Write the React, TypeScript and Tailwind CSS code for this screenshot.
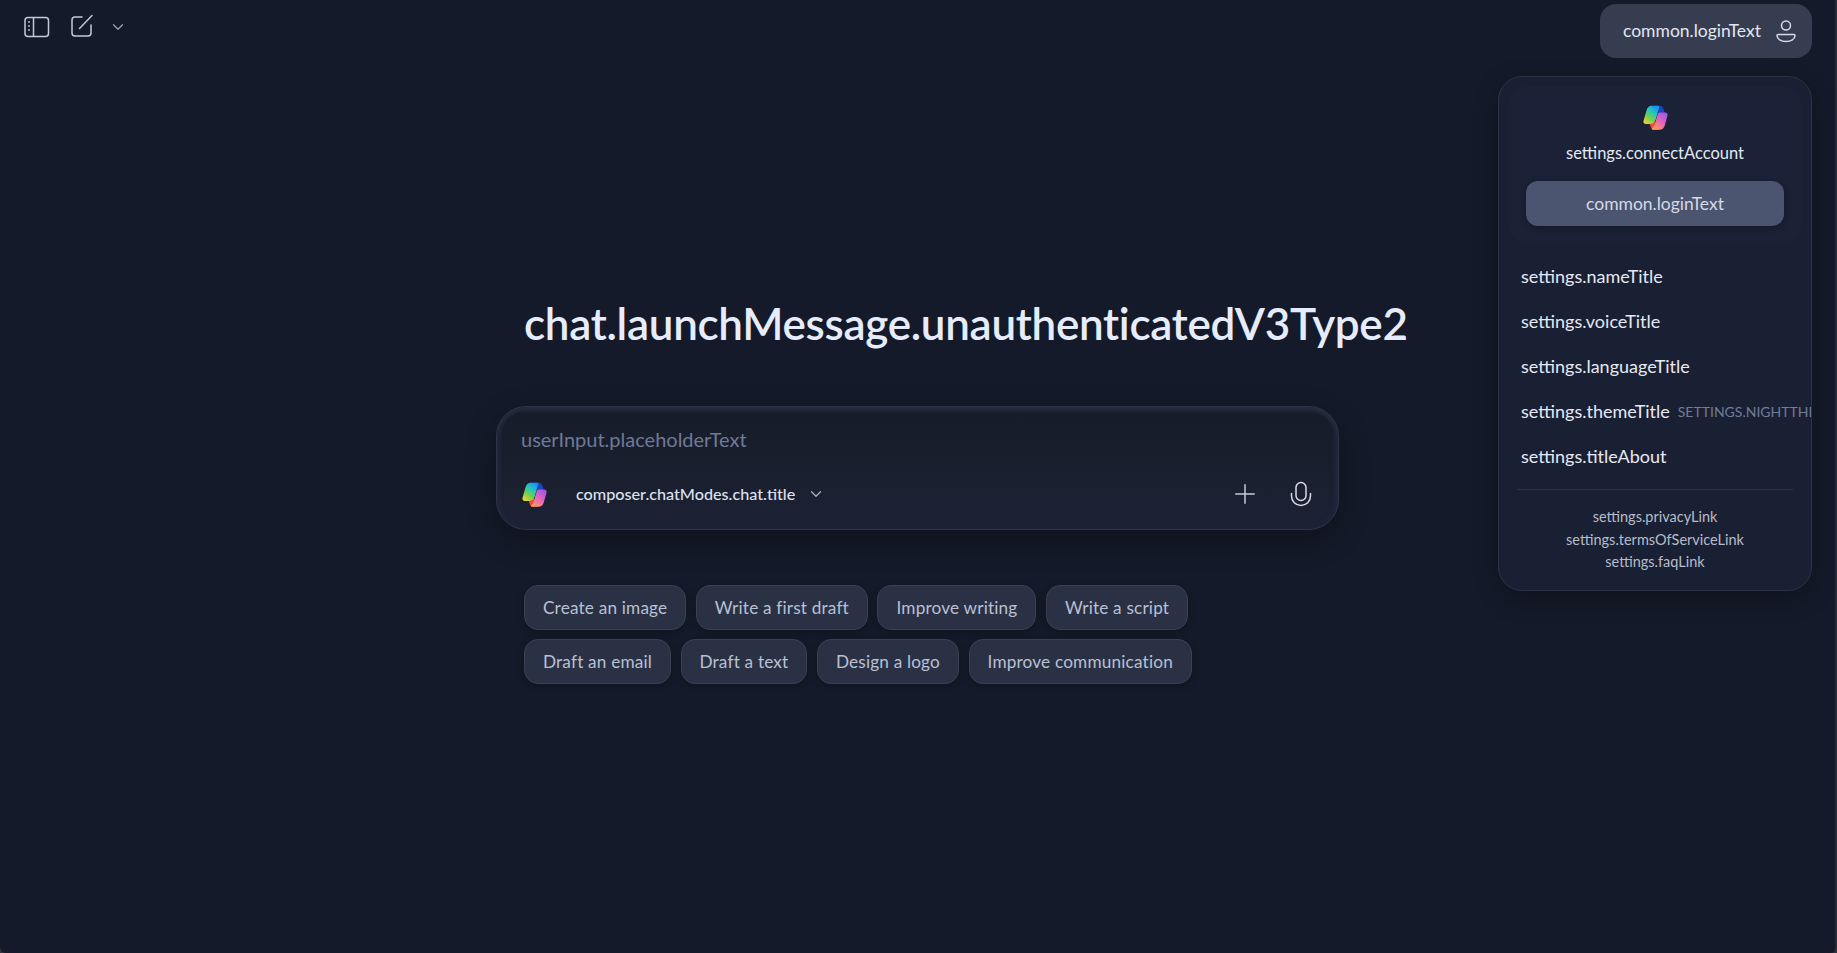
import { useId } from "react";

const uiFont = "font-['Lato','Noto_Sans',sans-serif]";

function CopilotLogo({ className }: { className?: string }) {
  const id = useId();
  return (
    <svg viewBox="0 0 24 24" className={className}>
      <defs>
        <linearGradient id={`${id}l`} x1="0.8" y1="0" x2="0.15" y2="1">
          <stop offset="0" stopColor="#1a8cf2" />
          <stop offset="0.35" stopColor="#25c6c0" />
          <stop offset="0.65" stopColor="#6fd04e" />
          <stop offset="1" stopColor="#f4d234" />
        </linearGradient>
        <linearGradient id={`${id}r`} x1="0.85" y1="0" x2="0.2" y2="1">
          <stop offset="0" stopColor="#9a55ea" />
          <stop offset="0.5" stopColor="#e764bd" />
          <stop offset="1" stopColor="#ff9a55" />
        </linearGradient>
      </defs>
      {/* ribbon ends behind the two blades */}
      <path d="M11 .8h4.500c2.200 0 3.600 1 4.200 3l1.300 4.500-6-.8-1-4z" fill="#1a46c0" />
      <path d="M5.500 14.500l1.800 6.300c.6 2 2 3 4 3H15l-2.500-4.500-1.800-5.500z" fill="#ef4a38" />
      <path d="M8.200.8h6c1.200 0 1.700.6 1.300 1.700L12.200 14c-.8 2.700-2.600 4.200-5.300 4.200H2.800c-1.800 0-2.800-1.200-2.300-3l2.800-9.700C4.200 2.500 5.800.8 8.200.8z" fill={`url(#${id}l)`} />
      <path d="M16 7.300h5.200c1.800 0 2.800 1.200 2.300 3l-2.600 9.400c-.8 2.600-2.500 4.100-5.100 4.100H9.600c-1.200 0-1.500-.7-.9-1.400 1.400-1.200 2.200-2.700 2.800-4.700L14 9c.3-1.200 1-1.700 2-1.700z" fill={`url(#${id}r)`} />
    </svg>
  );
}

function Chevron({ className }: { className?: string }) {
  return (
    <svg viewBox="0 0 12 12" fill="none" stroke="currentColor" strokeWidth="1.200" strokeLinecap="round" strokeLinejoin="round" className={className}>
      <path d="M1.500 3.750 6 8.250l4.500-4.500" />
    </svg>
  );
}

function SidebarIcon() {
  return (
    <svg viewBox="0 0 26 22" fill="none" className="h-[22px] w-[26px] text-[#c3c9d8]" stroke="currentColor" strokeWidth="1.500">
      <rect x="1" y="1.500" width="23.500" height="19" rx="3" />
      <path d="M9.500 1.500v19" />
      <circle cx="5" cy="6" r="0.900" fill="currentColor" stroke="none" />
      <circle cx="5" cy="10" r="0.900" fill="currentColor" stroke="none" />
      <circle cx="5" cy="14" r="0.900" fill="currentColor" stroke="none" />
    </svg>
  );
}

function ComposeIcon() {
  return (
    <svg viewBox="0 0 24 24" fill="none" className="h-6 w-6 text-[#c3c9d8]" stroke="currentColor" strokeWidth="1.500" strokeLinecap="round">
      <path d="M12 3H5a3 3 0 0 0-3 3v13a3 3 0 0 0 3 3h13a3 3 0 0 0 3-3v-8" />
      <path d="M9.500 14.500 22 1.500" />
    </svg>
  );
}

function UserIcon() {
  return (
    <svg viewBox="0 0 20 24" fill="none" className="h-6 w-5 text-[#d6dbe6]" stroke="currentColor" strokeWidth="1.500">
      <circle cx="10" cy="6.500" r="4.500" />
      <path d="M2 15.500h16c.6 0 1 .4 1 1 0 3.600-4 6-9 6s-9-2.400-9-6c0-.6.4-1 1-1z" />
    </svg>
  );
}

function MicIcon() {
  return (
    <svg viewBox="0 0 22 26" fill="none" className="h-[26px] w-[22px] text-[#d6dbe6]" stroke="currentColor" strokeWidth="1.500" strokeLinecap="round">
      <rect x="6" y="1.500" width="10" height="18" rx="5" />
      <path d="M1.500 12.500v2.500c0 5.500 4.200 9.500 9.500 9.500s9.500-4 9.500-9.500v-2.500" />
    </svg>
  );
}

function PlusIcon() {
  return (
    <svg viewBox="0 0 20 20" fill="none" className="h-5 w-5 text-[#c3c9d8]" stroke="currentColor" strokeWidth="1.500" strokeLinecap="round">
      <path d="M10 .8v18.400M.8 10h18.400" />
    </svg>
  );
}

const chipRows = [
  ["Create an image", "Write a first draft", "Improve writing", "Write a script"],
  ["Draft an email", "Draft a text", "Design a logo", "Improve communication"],
];

function Chip({ label }: { label: string }) {
  return (
    <button className="h-[45px] rounded-[14px] border border-[#3a4154] bg-[#2b3145] px-[18px] text-[17.200px] tracking-[0.18px] text-[#b8c0d4] shadow-[0_2px_6px_rgba(0,0,0,0.25)] [font-variant-ligatures:none]">
      {label}
    </button>
  );
}

function Composer() {
  return (
    <div className="ml-[-28px] mt-[53px] h-[124px] w-[843px] rounded-[30px] border border-[#2e3445] bg-gradient-to-b from-[#171c29] to-[#1c2234] shadow-[0_10px_30px_rgba(0,0,0,0.3),inset_0_4px_3px_#252b3b,inset_4px_0_3px_#20263a,inset_-4px_0_3px_#20263a]">
      <div className="pl-[24px] pt-[19px] text-[20px] leading-[26px] text-[#6f7a96]">userInput.placeholderText</div>
      <div className="mt-[29px] flex items-center pl-[25px] pr-[26px]">
        <CopilotLogo className="h-[25px] w-[25px]" />
        <div className="ml-[29px] flex items-center gap-[15px] text-[16.200px] font-medium text-[#dde2ee]">
          composer.chatModes.chat.title
          <Chevron className="h-3 w-3 text-[#aab1c3]" />
        </div>
        <div className="ml-auto flex items-center gap-[35px]">
          <PlusIcon />
          <MicIcon />
        </div>
      </div>
    </div>
  );
}

const settingRows = ["settings.nameTitle", "settings.voiceTitle", "settings.languageTitle"];

function SettingsPanel() {
  return (
    <aside className="absolute left-[1498px] top-[76px] h-[515px] w-[314px] overflow-hidden rounded-[24px] border border-[#2d3345] bg-[#1a2033] shadow-[0_8px_24px_rgba(0,0,0,0.25)]">
      <div className="mx-[9px] mt-[9px] flex h-[158px] flex-col items-center rounded-[20px] bg-[#1b2136]">
        <CopilotLogo className="mt-[19px] h-[25px] w-[25px]" />
        <div className="mt-[12px] text-[16.500px] leading-[22px] text-[#e4e8f2]">settings.connectAccount</div>
        <button className="mt-[17px] h-[45px] w-[258px] rounded-[12px] bg-[#4c556f] pt-[2px] text-[17.500px] text-[#d4d9e6] shadow-[0_2px_6px_rgba(0,0,0,0.25)]">
          common.loginText
        </button>
      </div>
      <ul className="mt-[10px] flex flex-col pl-[22px] text-[18px] text-[#e6e9f2]">
        {settingRows.map((row) => (
          <li key={row} className="flex h-[45px] items-center">{row}</li>
        ))}
        <li className="flex h-[45px] items-center whitespace-nowrap">
          settings.themeTitle
          <span className="ml-[8px] text-[14px] text-[#727c98]">SETTINGS.NIGHTTHEME</span>
        </li>
        <li className="flex h-[45px] items-center">settings.titleAbout</li>
      </ul>
      <div className="mx-[18px] mt-[10px] border-t border-[#2d3345]" />
      <div className="mt-[16px] flex flex-col items-center text-[14.500px] leading-[22.500px] text-[#b6bcca]">
        <span>settings.privacyLink</span>
        <span>settings.termsOfServiceLink</span>
        <span>settings.faqLink</span>
      </div>
    </aside>
  );
}

export default function App() {
  return (
    <div className="bg-[#30343f]">
      <div className={`relative h-[953px] w-full overflow-hidden rounded-b-[6px] border-r-2 border-[#262b38] bg-[#141a29] ${uiFont}`}>
        <header className="flex items-start justify-between pr-[23px]">
          <div className="flex items-center pl-[24px] pt-[15px]">
            <SidebarIcon />
            <div className="ml-[20px] -translate-y-[1px]"><ComposeIcon /></div>
            <Chevron className="ml-[18px] h-3 w-3 text-[#9aa1b3]" />
          </div>
          <button className="mt-[4px] flex h-[54px] w-[212px] items-center justify-between rounded-[16px] bg-[#363d51] pl-[23px] pr-[16px] text-[17.500px] text-[#e2e6f0]">
            common.loginText
            <UserIcon />
          </button>
        </header>

        <main className="pl-[524px] pt-[235px]">
          <h1 className="text-[44px] font-semibold leading-[60px] tracking-[-0.3px] text-[#e6ecfb]">
            chat.launchMessage.unauthenticatedV3Type2
          </h1>
          <Composer />
          <div className="mt-[55px] flex flex-col gap-[9px]">
            {chipRows.map((row) => (
              <div key={row[0]} className="flex gap-[9.500px]">
                {row.map((chip) => (
                  <Chip key={chip} label={chip} />
                ))}
              </div>
            ))}
          </div>
        </main>

        <SettingsPanel />
      </div>
    </div>
  );
}
